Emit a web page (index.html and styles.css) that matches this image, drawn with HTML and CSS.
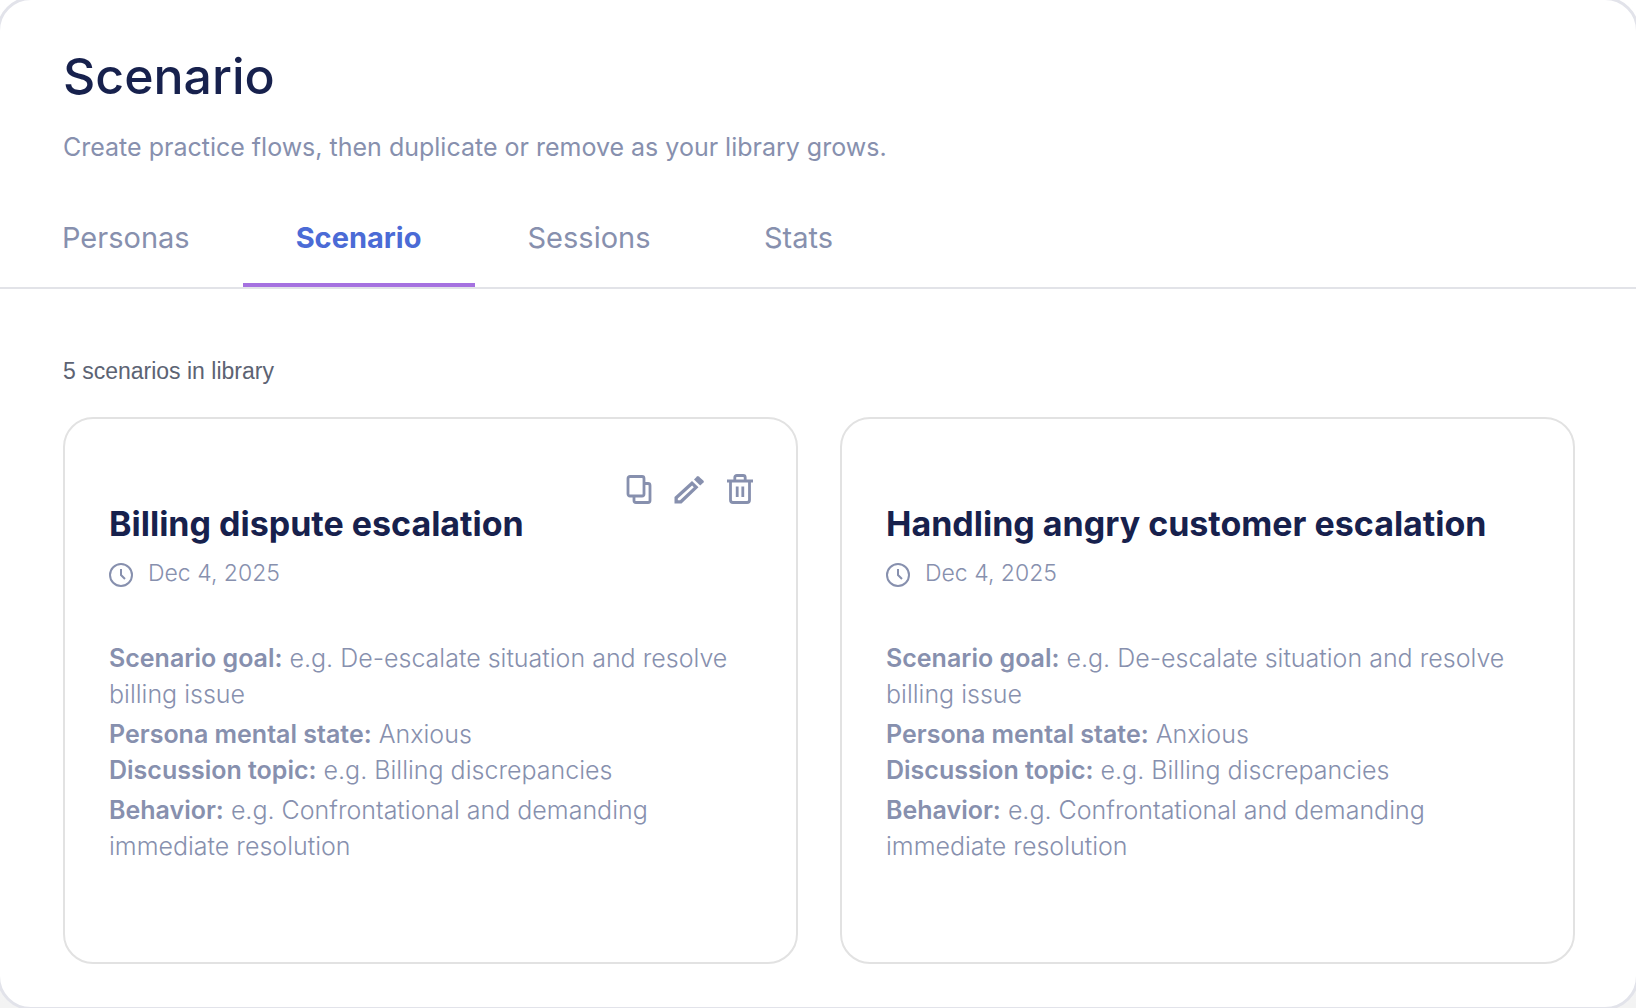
FILE: index.html
```html
<!DOCTYPE html>
<html lang="en">
<head>
    <meta charset="UTF-8">
    <meta name="viewport" content="width=device-width, initial-scale=1">
    <title>Scenario</title>
    <link rel="stylesheet" href="styles.css">
</head>
<body>
    <!-- Shared icons -->
    <svg class="icon-defs" aria-hidden="true">
        <symbol id="icon-clock" viewBox="0 0 24 24">
            <circle cx="12" cy="12" r="11" fill="none" stroke="currentColor" stroke-width="2"/>
            <path d="M12 6v6l4 4" fill="none" stroke="currentColor" stroke-width="2"/>
        </symbol>
    </svg>

    <main class="panel">
        <header class="panel-header">
            <h1>Scenario</h1>
            <p class="subtitle">Create practice flows, then duplicate or remove as your library grows.</p>
        </header>

        <nav class="tabs">
            <a class="tab" href="#personas">Personas</a>
            <a class="tab active" href="#scenario" aria-current="page">Scenario</a>
            <a class="tab" href="#sessions">Sessions</a>
            <a class="tab" href="#stats">Stats</a>
        </nav>

        <section class="library">
            <p class="library-count">5 scenarios in library</p>

            <div class="card-grid">
                <article class="card">
                    <div class="card-actions">
                        <button class="icon-button" type="button" aria-label="Duplicate">
                            <svg width="32" height="32" viewBox="0 0 32 32" fill="none" stroke="currentColor" stroke-width="2.8">
                                <rect x="4" y="3.5" width="16" height="19.5" rx="2"/>
                                <path d="M20 10.5h4a2 2 0 0 1 2 2v15a2 2 0 0 1-2 2h-12a2 2 0 0 1-2-2v-4"/>
                            </svg>
                        </button>
                        <button class="icon-button" type="button" aria-label="Edit">
                            <svg width="32" height="32" viewBox="0 0 32 32" fill="currentColor">
                                <path fill-rule="evenodd" d="M.5 24L18 8l6.500 6.300-17 16.200H.5zM3.800 25.600v1.600h2.200L19.800 14.200l-1.700-1.700z"/>
                                <path d="M20 6.500L23 3.500q.9-.8 1.800 0l4.700 4.300q.8.800 0 1.600l-3.300 3.100z"/>
                            </svg>
                        </button>
                        <button class="icon-button" type="button" aria-label="Delete">
                            <svg width="32" height="32" viewBox="0 0 32 32" fill="none" stroke="currentColor" stroke-width="2.8">
                                <path d="M3 8h26M6.500 8v19a2.500 2.500 0 0 0 2.500 2.500h14a2.500 2.500 0 0 0 2.500-2.500V8M10.800 8V4.500a2 2 0 0 1 2-2h6.400a2 2 0 0 1 2 2V8M13.200 13.500v10.500M18.800 13.500v10.500"/>
                            </svg>
                        </button>
                    </div>
                    <h2>Billing dispute escalation</h2>
                    <div class="card-date">
                        <svg class="clock" aria-hidden="true"><use href="#icon-clock"/></svg>
                        <time datetime="2025-12-04">Dec 4, 2025</time>
                    </div>
                    <div class="card-details">
                        <p><strong>Scenario goal:</strong> e.g. De-escalate situation and resolve billing issue</p>
                        <p><strong>Persona mental state:</strong> Anxious<br>
                        <strong>Discussion topic:</strong> e.g. Billing discrepancies</p>
                        <p><strong>Behavior:</strong> e.g. Confrontational and demanding immediate resolution</p>
                    </div>
                </article>

                <article class="card">
                    <div class="card-actions"></div>
                    <h2>Handling angry customer escalation</h2>
                    <div class="card-date">
                        <svg class="clock" aria-hidden="true"><use href="#icon-clock"/></svg>
                        <time datetime="2025-12-04">Dec 4, 2025</time>
                    </div>
                    <div class="card-details">
                        <p><strong>Scenario goal:</strong> e.g. De-escalate situation and resolve billing issue</p>
                        <p><strong>Persona mental state:</strong> Anxious<br>
                        <strong>Discussion topic:</strong> e.g. Billing discrepancies</p>
                        <p><strong>Behavior:</strong> e.g. Confrontational and demanding immediate resolution</p>
                    </div>
                </article>
            </div>
        </section>
    </main>
</body>
</html>
```
FILE: styles.css
```css
* {
    box-sizing: border-box;
}
body {
    margin: 0;
    display: flex;
    min-height: 100vh;
    overflow: hidden;
    background: linear-gradient(#fff, #f3f3f3);
    color: #8790ae;
    font-family: Inter, "Liberation Sans", sans-serif;
    font-size: 25px;
    line-height: 36px;
}
h1, h2, p {
    margin: 0;
}
.icon-defs {
    display: none;
}
.panel {
    flex: 1;
    margin: -3px -3px -2px;
    border: 3px solid #e2e3ea;
    border-radius: 34px;
    background: #fff;
}
.panel-header {
    padding: 44px 63px 0;
}
h1 {
    color: #17214d;
    font-size: 50px;
    font-weight: 500;
    line-height: 64px;
}
.subtitle {
    margin-top: 21px;
}
.tabs {
    display: flex;
    padding: 0 9px;
    margin-top: 39px;
    border-bottom: 2px solid #e2e3e8;
}
.tab {
    min-width: 190px;
    padding: 16px 53px 27px;
    border-bottom: 4px solid transparent;
    color: #8790ae;
    font-size: 29px;
    text-align: center;
    text-decoration: none;
}
.tab.active {
    border-bottom-color: #a571e0;
    color: #4b6bd6;
    font-weight: 700;
}
.library {
    padding: 64px 61px 41px 63px;
}
.library-count {
    color: #5c6373;
    font-family: "Liberation Sans", Arial, sans-serif;
    font-size: 23px;
}
.card-grid {
    display: grid;
    grid-template-columns: 1fr 1fr;
    gap: 42px;
    margin-top: 28px;
}
.card {
    padding: 54px 40px 98px 44px;
    border: 2px solid #e2e2e2;
    border-radius: 30px;
}
.card-actions {
    display: flex;
    justify-content: flex-end;
    gap: 18px;
    height: 31px;
}
.icon-button {
    padding: 0;
    border: none;
    background: none;
    color: #8790ae;
    cursor: pointer;
}
.icon-button svg {
    display: block;
}
h2 {
    color: #17214d;
    font-size: 34px;
    font-weight: 700;
    line-height: 40px;
}
.card-date {
    display: flex;
    align-items: center;
    gap: 15px;
    margin-top: 11px;
    font-size: 23px;
    font-weight: 300;
}
.clock {
    width: 24px;
    height: 24px;
    margin-top: 4px;
}
.card-details {
    display: grid;
    gap: 4px;
    margin-top: 49px;
    font-weight: 300;
}
strong {
    font-weight: 600;
}
```
